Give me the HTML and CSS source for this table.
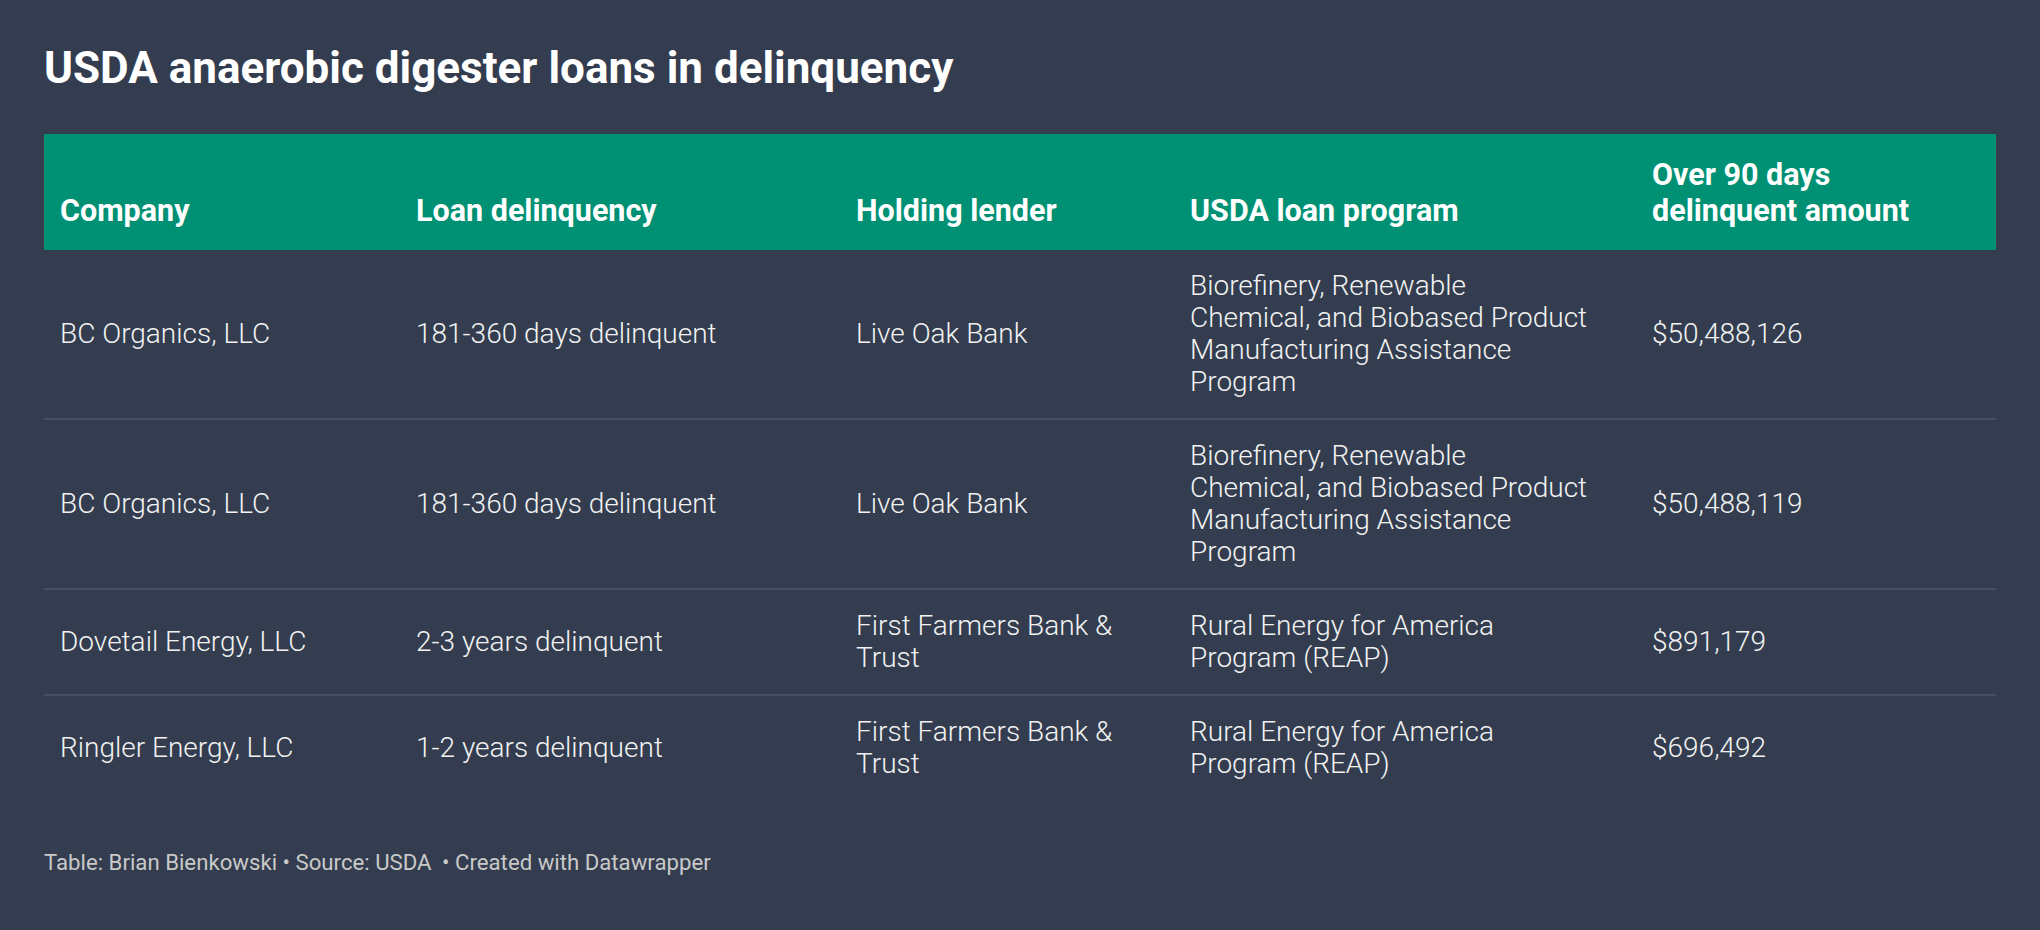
FILE: index.html
```html
<!DOCTYPE html>
<html lang="en">
<head>
<meta charset="utf-8">
<title>USDA anaerobic digester loans in delinquency</title>
<link rel="stylesheet" href="styles.css">
</head>
<body>
<div class="chart">
  <h1 class="title">USDA anaerobic digester loans in delinquency</h1>
  <table class="loans">
    <colgroup>
      <col class="c-company">
      <col class="c-delinq">
      <col class="c-lender">
      <col class="c-program">
      <col class="c-amount">
    </colgroup>
    <thead>
      <tr>
        <th>Company</th>
        <th>Loan delinquency</th>
        <th>Holding lender</th>
        <th>USDA loan program</th>
        <th>Over 90 days delinquent amount</th>
      </tr>
    </thead>
    <tbody>
      <tr>
        <td>BC Organics, LLC</td>
        <td>181-360 days delinquent</td>
        <td>Live Oak Bank</td>
        <td>Biorefinery, Renewable Chemical, and Biobased Product Manufacturing Assistance Program</td>
        <td>$50,488,126</td>
      </tr>
      <tr>
        <td>BC Organics, LLC</td>
        <td>181-360 days delinquent</td>
        <td>Live Oak Bank</td>
        <td>Biorefinery, Renewable Chemical, and Biobased Product Manufacturing Assistance Program</td>
        <td>$50,488,119</td>
      </tr>
      <tr>
        <td>Dovetail Energy, LLC</td>
        <td>2-3 years delinquent</td>
        <td>First Farmers Bank &amp; Trust</td>
        <td>Rural Energy for America Program (REAP)</td>
        <td>$891,179</td>
      </tr>
      <tr>
        <td>Ringler Energy, LLC</td>
        <td>1-2 years delinquent</td>
        <td>First Farmers Bank &amp; Trust</td>
        <td>Rural Energy for America Program (REAP)</td>
        <td>$696,492</td>
      </tr>
    </tbody>
  </table>
  <p class="footer">Table: Brian Bienkowski • Source: USDA <span class="created">• Created with Datawrapper</span></p>
</div>
</body>
</html>
```

FILE: styles.css
```css
html, body {
  margin: 0;
  padding: 0;
  background: #333d4f;
}

body {
  font-family: Roboto, "Liberation Sans", sans-serif;
  color: #ffffff;
}

.chart {
  padding: 42px 44px 0 44px;
}

.title {
  margin: 0 0 40px 0;
  font-size: 44px;
  line-height: 52px;
  font-weight: 700;
  color: #ffffff;
}

.loans {
  width: 100%;
  border-collapse: collapse;
  table-layout: fixed;
}

.c-company { width: 356px; }
.c-delinq { width: 440px; }
.c-lender { width: 334px; }
.c-program { width: 462px; }
.c-amount { width: 360px; }

.loans thead th {
  background: #009175;
  color: #ffffff;
  font-size: 30.5px;
  line-height: 36px;
  font-weight: 700;
  text-align: left;
  vertical-align: bottom;
  padding: 23px 48px 21px 16px;
}

.loans tbody td {
  font-size: 28px;
  line-height: 32px;
  font-weight: 300;
  color: #f2f2f2;
  text-align: left;
  vertical-align: middle;
  padding: 20px 48px 20px 16px;
  border-top: 2px solid #445063;
}

.loans tbody tr:first-child td {
  border-top: none;
}

.footer {
  margin: 49px 0 0 0;
  font-size: 22.2px;
  line-height: 26px;
  color: #c9c9c9;
  font-weight: 400;
}

.created {
  margin-left: 5px;
}
```
